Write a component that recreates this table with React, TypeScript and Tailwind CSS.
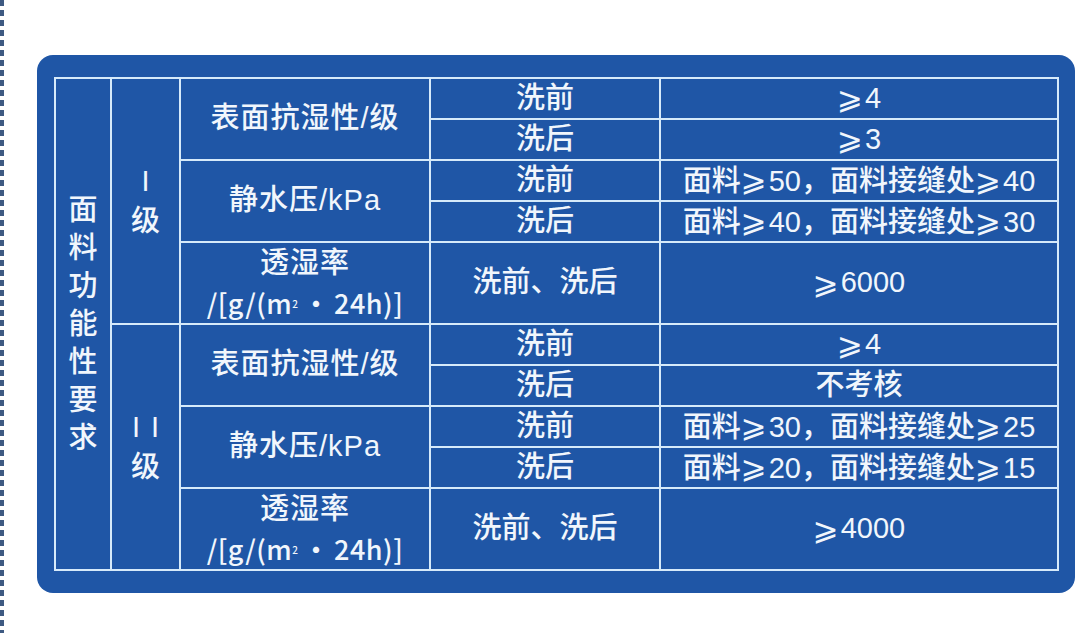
import React from "react";

const GE = () => (
  <span className="font-['DejaVu_Sans',sans-serif] text-[31px] font-normal mr-[2px]">⩾</span>
);

const Cell = ({
  children,
  className = "",
}: {
  children?: React.ReactNode;
  className?: string;
}) => (
  <div
    className={
      "bg-[#1f56a6] flex items-center justify-center text-center text-[#f1f6fc] " +
      className
    }
  >
    {children}
  </div>
);

const Mixed = ({ a, b }: { a: string; b: string }) => (
  <span className="whitespace-nowrap">
    面料<GE />
    {a}，面料接缝处<GE />
    {b}
  </span>
);

const Permeability = () => (
  <div className="flex flex-col items-center leading-[40px]">
    <span className="tracking-[1px]">透湿率</span>
    <span className="text-[27px] font-['Noto_Sans_CJK_SC',sans-serif] tracking-[0.5px] whitespace-nowrap">
      /[g/(m<sup className="text-[10px] relative -top-[6px]">2</sup>
      <span className="mx-[4px]">·</span>24h)]
    </span>
  </div>
);

const Level = ({ two }: { two?: boolean }) => (
  <div className="flex flex-col items-center leading-[40px]">
    {two ? (
      <span className="flex gap-[11px] font-['Liberation_Sans',sans-serif] font-normal">
        <span>I</span>
        <span>I</span>
      </span>
    ) : (
      <span className="font-['Liberation_Sans',sans-serif] font-normal">I</span>
    )}
    <span>级</span>
  </div>
);

export default function App() {
  return (
    <div className="w-[1080px] h-[633px] bg-white flex overflow-hidden font-['Liberation_Sans','Noto_Sans_CJK_SC',sans-serif] text-[29px] font-medium">
      <div className="w-[4px] h-[633px] shrink-0 bg-[repeating-linear-gradient(to_bottom,#3e5a82_0px,#3e5a82_6px,transparent_6px,transparent_10px)]" />
      <div className="ml-[33px] mt-[55px] w-[1038px] h-[538px] rounded-[16px] bg-[#1f56a6] pl-[17px] pt-[22px]">
        <div className="w-[1005px] h-[494px] bg-[#d6eafa] p-[2px] grid grid-cols-[54px_67px_248px_228px_396px] grid-rows-[repeat(12,39px)] gap-[2px]">
          <Cell className="row-span-12 flex-col leading-[38px]">
            {"面料功能性要求".split("").map((c, i) => (
              <span key={i}>{c}</span>
            ))}
          </Cell>
          <Cell className="row-span-6">
            <Level />
          </Cell>
          <Cell className="row-span-2 tracking-[1px]">表面抗湿性/级</Cell>
          <Cell>洗前</Cell>
          <Cell>
            <GE />4
          </Cell>
          <Cell>洗后</Cell>
          <Cell>
            <GE />3
          </Cell>
          <Cell className="row-span-2 tracking-[1px]">静水压/kPa</Cell>
          <Cell>洗前</Cell>
          <Cell>
            <Mixed a="50" b="40" />
          </Cell>
          <Cell>洗后</Cell>
          <Cell>
            <Mixed a="40" b="30" />
          </Cell>
          <Cell className="row-span-2">
            <Permeability />
          </Cell>
          <Cell className="row-span-2">洗前、洗后</Cell>
          <Cell className="row-span-2">
            <GE />6000
          </Cell>

          <Cell className="row-span-6">
            <Level two />
          </Cell>
          <Cell className="row-span-2 tracking-[1px]">表面抗湿性/级</Cell>
          <Cell>洗前</Cell>
          <Cell>
            <GE />4
          </Cell>
          <Cell>洗后</Cell>
          <Cell>不考核</Cell>
          <Cell className="row-span-2 tracking-[1px]">静水压/kPa</Cell>
          <Cell>洗前</Cell>
          <Cell>
            <Mixed a="30" b="25" />
          </Cell>
          <Cell>洗后</Cell>
          <Cell>
            <Mixed a="20" b="15" />
          </Cell>
          <Cell className="row-span-2">
            <Permeability />
          </Cell>
          <Cell className="row-span-2">洗前、洗后</Cell>
          <Cell className="row-span-2">
            <GE />4000
          </Cell>
        </div>
      </div>
    </div>
  );
}
